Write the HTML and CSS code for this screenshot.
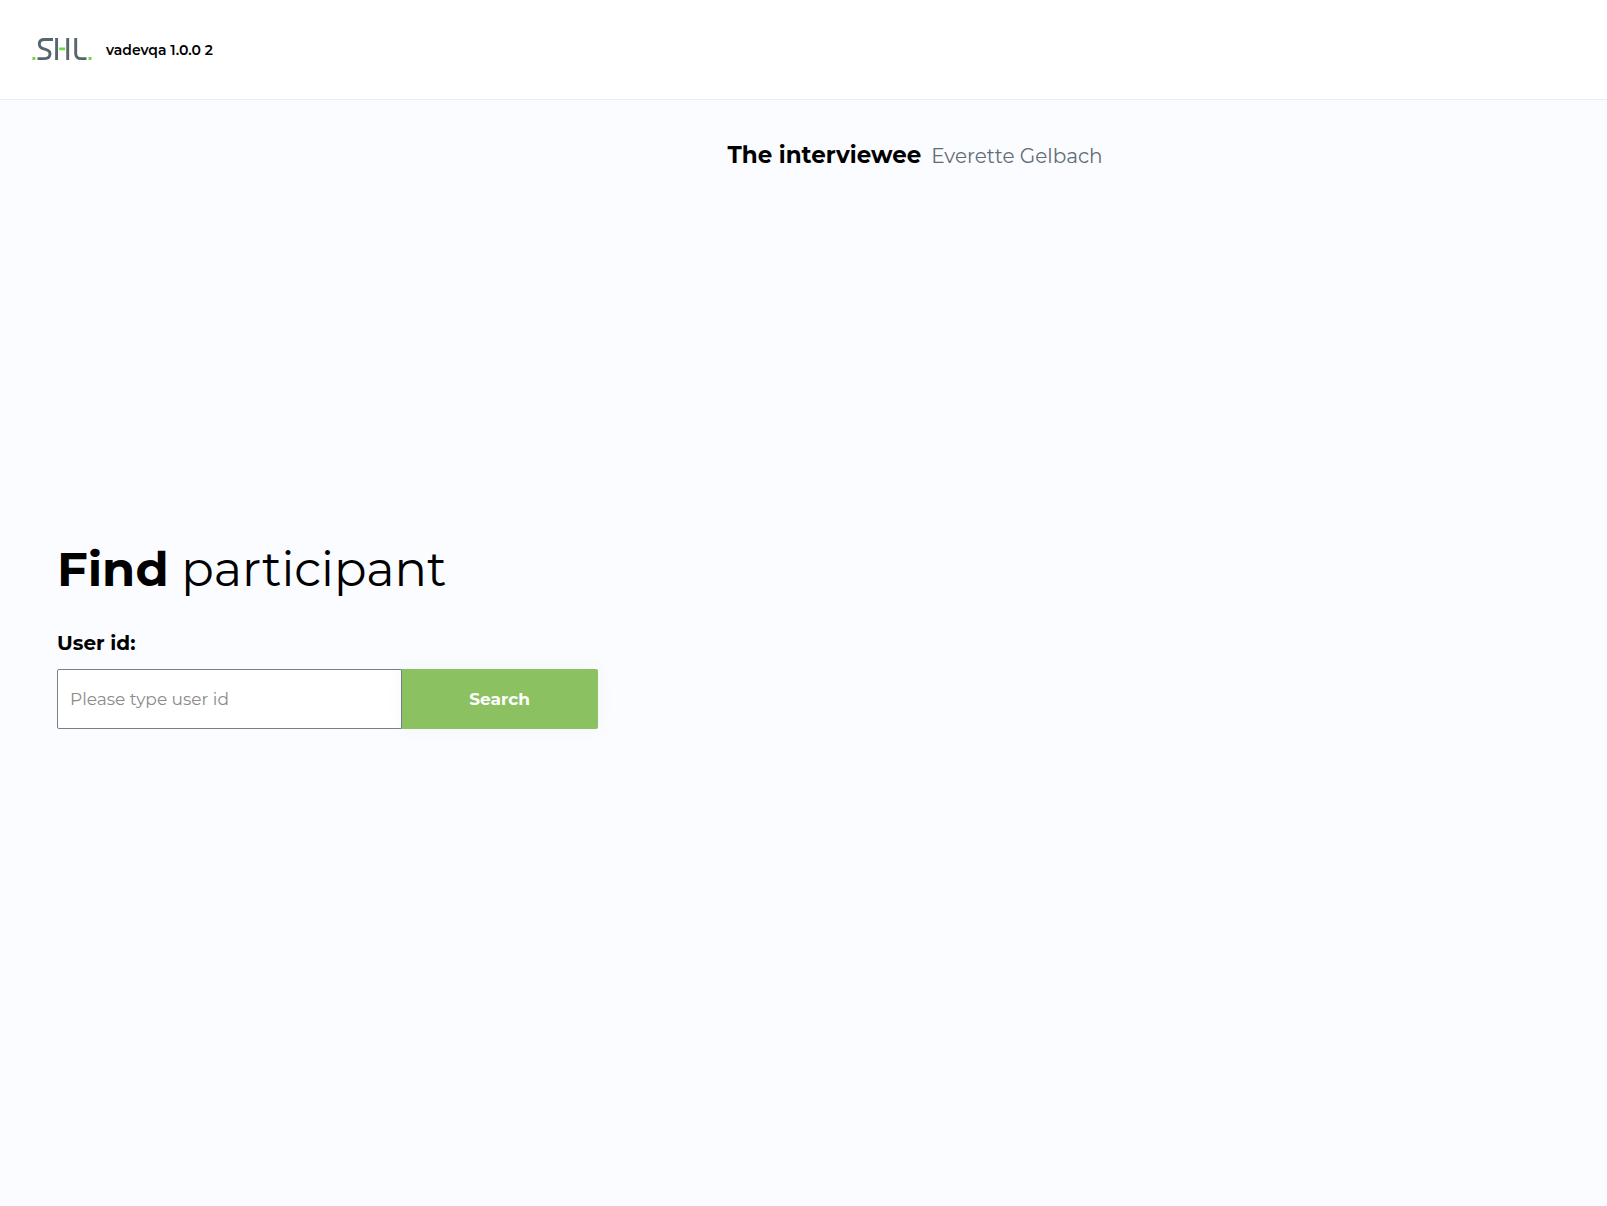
FILE: index.html
```html
<!DOCTYPE html>
<html lang="en">
<head>
<meta charset="utf-8">
<meta name="viewport" content="width=device-width, initial-scale=1">
<title>Find participant</title>
<link rel="stylesheet" href="styles.css">
</head>
<body>
<header class="header">
  <svg class="logo" viewBox="0 0 60 24" role="img" aria-label="SHL">
    <g fill="none" stroke="#57656f" stroke-width="2.9">
      <path d="M21 2.500h-8.500c-3.300 0-5.200 1.600-5.200 4.400s1.700 4.200 4.700 5l1.500.4c3 .8 4.500 2.100 4.500 4.500 0 3-2 4.800-5.400 4.800H5.500"/>
      <path d="M24.600 1v22M35.700 1v22M43.700 1v15.500c0 3.500 1.800 5.100 5.300 5.100h5.500"/>
    </g>
    <path fill="#74d83e" d="M27.200 10.400h6v2.800h-6zM.4 20h3v3h-3zM56.500 20h3v3h-3z"/>
  </svg>
  <span class="version">vadevqa 1.0.0 2</span>
</header>
<main class="content">
  <section class="finder">
    <h1 class="title"><strong>Find</strong> participant</h1>
    <form class="form">
      <label class="label" for="user-id">User id:</label>
      <div class="search">
        <input class="input" id="user-id" type="text" placeholder="Please type user id">
        <button class="button" type="button">Search</button>
      </div>
    </form>
  </section>
  <section class="details">
    <div class="person">
      <h2 class="role">The interviewee</h2>
      <span class="name">Everette Gelbach</span>
    </div>
  </section>
</main>
</body>
</html>
```
FILE: styles.css
```css
* {
  box-sizing: border-box;
}

body {
  display: flex;
  flex-direction: column;
  min-height: 100vh;
  margin: 0;
  background: #fbfcff;
  color: #000;
  font-family: Montserrat, Inter, sans-serif;
}

.header {
  display: flex;
  align-items: center;
  gap: 14px;
  padding: 32px;
  border-bottom: 1px solid #ebedf2;
  background: #fff;
}

.logo {
  width: 60px;
  height: 24px;
  margin: 5px 0 6px;
}

.version {
  font-size: 14px;
  font-weight: 600;
  line-height: 20px;
}

.content {
  display: grid;
  flex: 1;
  grid-template-columns: 5fr 7fr;
}

.finder {
  align-self: center;
  padding: 0 72px 38px 57px;
}

.title {
  margin: 0 0 30px;
  font-size: 48px;
  font-weight: 400;
  line-height: 60px;
}

.title strong {
  font-weight: 700;
}

.label {
  display: block;
  margin-bottom: 12px;
  font-size: 20px;
  font-weight: 700;
  line-height: 28px;
}

.search {
  display: flex;
  height: 60px;
}

.input {
  flex: 1;
  min-width: 0;
  padding: 0 12px;
  border: 1px solid #77808a;
  border-radius: 2px 0 0 2px;
  background: #fff;
  color: #000;
  font: 400 17px Montserrat, Inter, sans-serif;
}

.input::placeholder {
  color: #8b8b8b;
}

.button {
  width: 196px;
  border: 0;
  border-radius: 0 2px 2px 0;
  background: #8bc160;
  box-shadow: 0 0 20px rgba(60, 60, 110, 0.04);
  color: #fff;
  font: 700 17px Montserrat, Inter, sans-serif;
}

.details {
  padding: 39px 58px;
}

.person {
  display: flex;
  align-items: baseline;
  gap: 10px;
}

.role {
  margin: 0;
  font-size: 23px;
  font-weight: 700;
  line-height: 32px;
}

.name {
  color: #626d76;
  font-size: 20px;
  font-weight: 400;
  line-height: 32px;
}
```
